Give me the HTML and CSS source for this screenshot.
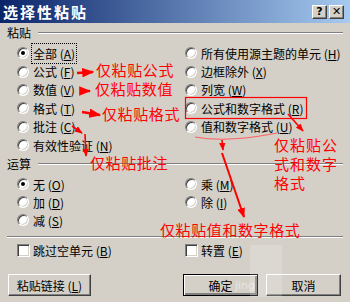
FILE: index.html
```html
<!DOCTYPE html>
<html>
<head>
<title>选择性粘贴</title>
<meta charset="UTF-8">
<link rel="stylesheet" href="styles.css">
</head>
<body>
<div class="dialog">
  <div class="titlebar">
    <span class="title">选择性粘贴</span>
    <span class="tb-btn">?</span>
    <span class="tb-btn">✕</span>
  </div>

  <div class="content">
    <div class="group-head">粘贴</div>
    <div class="options paste">
      <div class="col">
        <div class="opt"><span class="radio checked"></span><span class="focus">全部 (<u>A</u>)</span></div>
        <div class="opt"><span class="radio"></span>公式 (<u>F</u>)</div>
        <div class="opt"><span class="radio"></span>数值 (<u>V</u>)</div>
        <div class="opt"><span class="radio"></span>格式 (<u>T</u>)</div>
        <div class="opt"><span class="radio"></span>批注 (<u>C</u>)</div>
        <div class="opt"><span class="radio"></span>有效性验证 (<u>N</u>)</div>
      </div>
      <div class="col">
        <div class="opt"><span class="radio"></span>所有使用源主题的单元 (<u>H</u>)</div>
        <div class="opt"><span class="radio"></span>边框除外 (<u>X</u>)</div>
        <div class="opt"><span class="radio"></span>列宽 (<u>W</u>)</div>
        <div class="opt"><span class="radio"></span>公式和数字格式 (<u>R</u>)</div>
        <div class="opt"><span class="radio"></span>值和数字格式 (<u>U</u>)</div>
      </div>
    </div>

    <div class="group-head">运算</div>
    <div class="options calc">
      <div class="col">
        <div class="opt"><span class="radio checked"></span>无 (<u>O</u>)</div>
        <div class="opt"><span class="radio"></span>加 (<u>D</u>)</div>
        <div class="opt"><span class="radio"></span>减 (<u>S</u>)</div>
      </div>
      <div class="col">
        <div class="opt"><span class="radio"></span>乘 (<u>M</u>)</div>
        <div class="opt"><span class="radio"></span>除 (<u>I</u>)</div>
      </div>
    </div>

    <div class="separator"></div>

    <div class="options checks">
      <div class="col">
        <div class="opt"><span class="checkbox"></span>跳过空单元 (<u>B</u>)</div>
      </div>
      <div class="col">
        <div class="opt"><span class="checkbox"></span>转置 (<u>E</u>)</div>
      </div>
    </div>

    <div class="button-row">
      <button class="btn btn-link">粘贴链接 (<u>L</u>)</button>
      <button class="btn btn-ok">确定</button>
      <button class="btn btn-cancel">取消</button>
    </div>
  </div>

  <!-- red notes drawn over the dialog -->
  <svg class="marks" width="350" height="302" viewBox="0 0 350 302">
    <defs>
      <marker id="head" markerWidth="5" markerHeight="4" refX="4.5" refY="2" orient="auto" markerUnits="strokeWidth">
        <path d="M0,0 L5,2 L0,4 Z" fill="#ff0000"/>
      </marker>
    </defs>
    <g stroke="#ff0000" stroke-width="2.4" fill="none">
      <line x1="77" y1="73" x2="93" y2="72" marker-end="url(#head)"/>
      <line x1="83" y1="91" x2="90" y2="91" marker-end="url(#head)"/>
      <line x1="82" y1="112" x2="100" y2="115" marker-end="url(#head)"/>
      <line x1="72" y1="126" x2="82" y2="133" marker-end="url(#head)" stroke-width="1.6"/>
      <line x1="85" y1="134" x2="86" y2="156" marker-end="url(#head)" stroke-width="1.6"/>
      <line x1="288" y1="114" x2="303" y2="131" marker-end="url(#head)" stroke-width="1.6"/>
      <line x1="222" y1="140" x2="223" y2="150" marker-end="url(#head)" stroke-width="1.6"/>
      <line x1="222" y1="153" x2="244" y2="217" marker-end="url(#head)" stroke-width="2"/>
    </g>
    <rect x="185.5" y="97.5" width="121" height="21" fill="none" stroke="#ff0000" stroke-width="1.2"/>
    <path d="M195,137 Q228,143 277,133" fill="none" stroke="#ff6060" stroke-width="1.2"/>
  </svg>

  <div class="note n-formula">仅粘贴公式</div>
  <div class="note n-value">仅粘贴数值</div>
  <div class="note n-format">仅粘贴格式</div>
  <div class="note n-comment">仅粘贴批注</div>
  <div class="note n-fnum">仅粘贴公<br>式和数字<br>格式</div>
  <div class="note n-vnum">仅粘贴值和数字格式</div>

  <div class="watermark">jing</div>
</div>
</body>
</html>
```

FILE: styles.css
```css
body {
  margin: 0;
  background-color: #d4d0c8;
  font-family: "Noto Sans CJK SC", "DejaVu Sans", sans-serif;
  font-size: 12px;
  color: #000;
}
.dialog {
  position: relative;
  width: 350px;
  height: 302px;
  overflow: hidden;
}
.titlebar {
  display: flex;
  align-items: center;
  height: 23px;
  padding: 0 6px 0 3px;
  background: linear-gradient(to right, #0a246a, #a6caf0);
}
.title {
  flex: 1;
  color: #fff;
  font-weight: bold;
  font-size: 15px;
  letter-spacing: 2px;
  line-height: 1;
}
.tb-btn {
  display: flex;
  align-items: center;
  justify-content: center;
  width: 13px;
  height: 12px;
  margin-left: 2px;
  background-color: #d4d0c8;
  border: 1px solid;
  border-color: #fff #404040 #404040 #fff;
  box-shadow: inset -1px -1px #808080;
  font-family: "DejaVu Sans", sans-serif;
  font-weight: bold;
  font-size: 11px;
  line-height: 1;
}
.content {
  padding: 0 7px;
}
.group-head {
  display: flex;
  align-items: center;
  height: 14px;
  margin-top: 3px;
  line-height: 1;
}
.group-head::after {
  content: "";
  flex: 1;
  margin-left: 7px;
  border-top: 1px solid #808080;
  border-bottom: 1px solid #fff;
}
.options {
  display: flex;
  padding-left: 10px;
  margin-top: 4px;
}
.col {
  width: 168px;
}
.col + .col {
  width: auto;
}
.opt {
  display: flex;
  align-items: center;
  height: 18.4px;
  white-space: nowrap;
}
.calc .opt {
  height: 18px;
}
.radio {
  position: relative;
  box-sizing: border-box;
  width: 12px;
  height: 12px;
  margin-right: 4px;
  border-radius: 50%;
  background-color: #fff;
  border: 1px solid;
  border-color: #808080 #fff #fff #808080;
  box-shadow: inset 1px 1px #404040, inset -1px -1px #d4d0c8;
}
.radio.checked::after {
  content: "";
  position: absolute;
  left: 3px;
  top: 3px;
  width: 4px;
  height: 4px;
  border-radius: 50%;
  background-color: #000;
}
.focus {
  outline: 1px dotted #000;
  padding: 1px 1px;
  margin-left: -1px;
}
.separator {
  margin-top: 7px;
  border-top: 1px solid #808080;
  border-bottom: 1px solid #fff;
}
.checks {
  margin-top: 3px;
}
.checks .opt {
  height: 18px;
}
.checkbox {
  box-sizing: border-box;
  width: 13px;
  height: 13px;
  margin-right: 3px;
  background-color: #fff;
  border: 1px solid;
  border-color: #808080 #fff #fff #808080;
  box-shadow: inset 1px 1px #404040, inset -1px -1px #d4d0c8;
}
.button-row {
  display: flex;
  margin-top: 15px;
  padding-left: 1px;
}
.btn {
  box-sizing: border-box;
  height: 22px;
  padding: 0;
  background-color: #d4d0c8;
  border: 1px solid;
  border-color: #fff #404040 #404040 #fff;
  box-shadow: inset -1px -1px #808080;
  font-family: inherit;
  font-size: 12px;
  color: #000;
}
.btn-link {
  width: 83px;
}
.btn-ok {
  width: 75px;
  margin-left: 92px;
  border-color: #000;
  box-shadow: inset 1px 1px #fff, inset -2px -2px #808080;
}
.btn-cancel {
  width: 75px;
  margin-left: 8px;
}
.marks {
  position: absolute;
  left: 0;
  top: 0;
  pointer-events: none;
}
.note {
  position: absolute;
  color: #ff0000;
  font-size: 15px;
  letter-spacing: 0.6px;
  line-height: 1;
  white-space: nowrap;
}
.n-formula { left: 96px; top: 62px; }
.n-value { left: 95px; top: 81px; }
.n-format { left: 102px; top: 106px; }
.n-comment { left: 90px; top: 155px; }
.n-fnum { left: 274px; top: 135px; line-height: 19px; letter-spacing: 1px; }
.n-vnum { left: 160px; top: 222px; }
.watermark {
  position: absolute;
  left: 250px;
  top: 245px;
  width: 32px;
  height: 52px;
  background: rgba(255, 255, 255, 0.18);
  color: rgba(255, 255, 255, 0.5);
  font-family: "DejaVu Sans", sans-serif;
  font-size: 11px;
  line-height: 82px;
  text-indent: -15px;
}
```
